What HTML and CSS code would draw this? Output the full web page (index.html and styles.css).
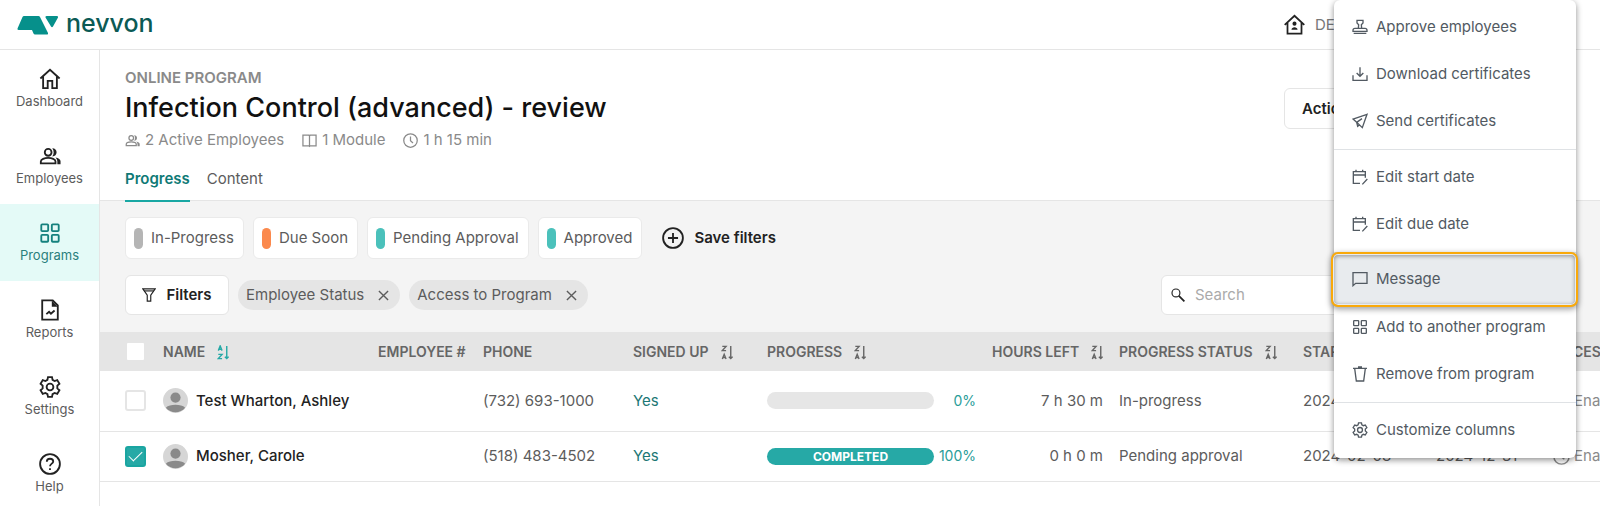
FILE: index.html
```
<!DOCTYPE html>
<html lang="en">
<head>
    <meta charset="UTF-8">
    <meta name="viewport" content="width=device-width, initial-scale=1.0">
    <title>Infection Control (advanced) - review | nevvon</title>
    <link rel="stylesheet" href="styles.css">
</head>
<body>
    <!-- Icon sprite -->
    <svg class="sprite" aria-hidden="true">
        <symbol id="i-home" viewBox="0 0 24 24"><path d="M1.500 11.500 12 2l10.500 9.500M4.500 9.500V22h5v-8h5v8h5V9.500"/></symbol>
        <symbol id="i-people" viewBox="0 0 24 24"><circle cx="10" cy="8" r="3.700"/><path d="M2 20v-2c0-2.500 4-4 8-4s8 1.500 8 4v2z"/><path class="solid" d="M14.500 3.500c3 0 4.700 2 4.700 4.500s-1.700 4.500-4.700 4.500c2-2.500 2-6.500 0-9zM18 13.500c3.500.6 5.500 2.200 5.500 4.200V21H20v-3c0-1.800-.7-3.200-2-4.500z"/></symbol>
        <symbol id="i-grid" viewBox="0 0 24 24"><rect x="2.500" y="2.500" width="7.500" height="7.500" rx="1"/><rect x="14" y="2.500" width="7.500" height="7.500" rx="1"/><rect x="2.500" y="14" width="7.500" height="7.500" rx="1"/><rect x="14" y="14" width="7.500" height="7.500" rx="1"/></symbol>
        <symbol id="i-report" viewBox="0 0 24 24"><path d="M3.500 1.500h11.500L20.500 7v15.500h-17z"/><path class="solid" d="M14 1.500V8.500h6.500z"/><path d="m8 16.500 3-2.500 2 2 4-3.500"/></symbol>
        <symbol id="i-gear" viewBox="0 0 24 24"><circle cx="12" cy="12" r="3.700"/><path d="m9.800 1.200-.6 3-2.200 1.300-2.900-1-2.400 4 2.300 2v3l-2.300 2 2.400 4 2.900-1 2.200 1.300.6 3h4.400l.6-3 2.200-1.300 2.900 1 2.400-4-2.300-2v-3l2.300-2-2.400-4-2.900 1-2.200-1.300-.6-3z"/></symbol>
        <symbol id="i-help" viewBox="0 0 24 24"><circle cx="12" cy="12" r="10.800"/><path d="M8.500 9.500c0-2 1.500-3.200 3.500-3.200s3.500 1.200 3.500 2.900c0 2.300-3.500 2.600-3.500 5.300M12 16.500v2"/></symbol>
        <symbol id="i-agency" viewBox="0 0 24 24"><path d="M.8 12.500 12 2l11.200 10.500M4 10v12.500h16V10"/><circle class="solid" cx="12" cy="11" r="2.300"/><path class="solid" d="M8.500 18c0-4 7-4 7 0z"/></symbol>
        <symbol id="i-book" viewBox="0 0 24 24"><path d="M1.500 3.500h9.500l1 1 1-1h9.500v17h-9.500l-1 1-1-1H1.500zM12 4.500v17"/></symbol>
        <symbol id="i-clock" viewBox="0 0 24 24"><circle cx="12" cy="12" r="10.800"/><path d="M12 5.500v7l4 3.500"/></symbol>
        <symbol id="i-plus" viewBox="0 0 24 24"><circle cx="12" cy="12" r="10.800"/><path d="M12 6.500v11M6.500 12h11"/></symbol>
        <symbol id="i-funnel" viewBox="0 0 24 24"><path d="M1.500 1.500h21l-7.500 11v10H9v-10z"/><path d="M4 5h16"/></symbol>
        <symbol id="i-close" viewBox="0 0 24 24"><path d="m2 2 20 20M22 2 2 22"/></symbol>
        <symbol id="i-search" viewBox="0 0 24 24"><circle cx="8.500" cy="8.500" r="6.800"/><path class="thick" d="m13.500 13.500 9.500 9.500"/></symbol>
        <symbol id="i-az" viewBox="0 0 12 16"><path d="m1 6 2-5 2 5M1.700 4.500h2.600M1 10h4l-4 4.500h4M10 1v13.500M8 12.500l2 2 2-2"/></symbol>
        <symbol id="i-za" viewBox="0 0 12 16"><path d="M1 1.500h4L1 6h4M1 15l2-5 2 5M1.700 13.500h2.600M10 1v13.500M8 12.500l2 2 2-2"/></symbol>
        <symbol id="i-user" viewBox="0 0 26 26"><circle cx="13" cy="13" r="13" fill="#d6d6d6"/><circle cx="13" cy="10" r="5.300" fill="#8a8a8a"/><path d="M3 20.500c4-4 16-4 20 0a13 13 0 0 1-20 0z" fill="#8a8a8a"/></symbol>
        <symbol id="i-stamp" viewBox="0 0 24 24"><path d="M9.500 14 10 8.500 7.500 6V2h9v4L14 8.500l.5 5.500M1.500 18.500V17c0-2 1-3 3-3h15c2 0 3 1 3 3v1.500zM2.500 21.500h19"/></symbol>
        <symbol id="i-download" viewBox="0 0 24 24"><path d="M12 2v13M7 10.500l5 5 5-5M1.500 14v7.500h21V14"/></symbol>
        <symbol id="i-send" viewBox="0 0 24 24"><path d="M22.500 2 1.500 9l5.500 5L15.500 22zM7 14l8-5.500M7 14l1.500 6 3-2.500"/></symbol>
        <symbol id="i-calendar" viewBox="0 0 24 24"><path d="M12 21.500H2V4h18v9M2 9h18M6 1v4M16 1v4M15.500 23l7.500-8"/></symbol>
        <symbol id="i-message" viewBox="0 0 24 24"><path d="M1.500 2.500h21v16H5.500l-4 3.500z"/></symbol>
        <symbol id="i-trash" viewBox="0 0 24 24"><path d="M1.500 3.500h21M4 3.500l2.500 19h11L20 3.500M9 1.500h6"/></symbol>
    </svg>

    <header class="topbar">
        <a href="#" class="brand">
            <svg class="brand-mark" viewBox="0 0 42 20"><path d="M7 1h14.500q1 0 1.500 1l8 16q.5 1.500-1 1.500H18q-1 0-1.500-1L15 15H2Q0 15 .5 13.500L5.500 2Q6 1 7 1zM29.500 1H40q1.500 0 1 1.500l-5 9q-1 1.500-2 0l-5.500-9Q28 1 29.500 1z"/></svg>
            <span>nevvon</span>
        </a>
        <a href="#" class="agency"><svg class="icon"><use href="#i-agency"/></svg>DEMO Agency</a>
    </header>

    <div class="layout">
        <nav class="sidebar">
            <a href="#"><svg class="icon"><use href="#i-home"/></svg>Dashboard</a>
            <a href="#"><svg class="icon"><use href="#i-people"/></svg>Employees</a>
            <a href="#" class="active"><svg class="icon"><use href="#i-grid"/></svg>Programs</a>
            <a href="#"><svg class="icon"><use href="#i-report"/></svg>Reports</a>
            <a href="#"><svg class="icon"><use href="#i-gear"/></svg>Settings</a>
            <a href="#"><svg class="icon"><use href="#i-help"/></svg>Help</a>
        </nav>

        <main class="content">
            <section class="program">
                <div class="program-head">
                    <div>
                        <p class="eyebrow">ONLINE PROGRAM</p>
                        <h1>Infection Control (advanced) - review</h1>
                        <ul class="meta">
                            <li><svg class="icon"><use href="#i-people"/></svg>2 Active Employees</li>
                            <li><svg class="icon"><use href="#i-book"/></svg>1 Module</li>
                            <li><svg class="icon"><use href="#i-clock"/></svg>1 h 15 min</li>
                        </ul>
                    </div>
                    <button type="button" class="btn actions">Actions</button>
                </div>
                <div class="tabs">
                    <a href="#" class="active">Progress</a>
                    <a href="#">Content</a>
                </div>
            </section>

            <section class="filters">
                <div class="filter-row">
                    <button type="button" class="status"><i class="grey"></i>In-Progress</button>
                    <button type="button" class="status"><i class="orange"></i>Due Soon</button>
                    <button type="button" class="status"><i class="teal"></i>Pending Approval</button>
                    <button type="button" class="status"><i class="teal"></i>Approved</button>
                    <button type="button" class="save"><svg class="icon"><use href="#i-plus"/></svg>Save filters</button>
                </div>
                <div class="filter-row">
                    <button type="button" class="btn filter-btn"><svg class="icon"><use href="#i-funnel"/></svg>Filters</button>
                    <button type="button" class="pill">Employee Status<svg class="icon"><use href="#i-close"/></svg></button>
                    <button type="button" class="pill">Access to Program<svg class="icon"><use href="#i-close"/></svg></button>
                    <label class="search">
                        <svg class="icon"><use href="#i-search"/></svg>
                        <input type="text" placeholder="Search" aria-label="Search">
                    </label>
                </div>
            </section>

            <table class="employees">
                <colgroup>
                    <col class="c-check"><col class="c-name"><col class="c-number"><col class="c-phone"><col class="c-signed"><col class="c-progress"><col class="c-hours"><col class="c-status"><col class="c-start"><col class="c-end"><col class="c-access">
                </colgroup>
                <thead>
                    <tr>
                        <th><input type="checkbox" aria-label="Select all"></th>
                        <th>NAME<svg class="sort on"><use href="#i-az"/></svg></th>
                        <th>EMPLOYEE #</th>
                        <th>PHONE</th>
                        <th>SIGNED UP<svg class="sort"><use href="#i-za"/></svg></th>
                        <th>PROGRESS<svg class="sort"><use href="#i-za"/></svg></th>
                        <th class="right">HOURS LEFT<svg class="sort"><use href="#i-za"/></svg></th>
                        <th>PROGRESS STATUS<svg class="sort"><use href="#i-za"/></svg></th>
                        <th>START DATE</th>
                        <th>END DATE</th>
                        <th>ACCESS</th>
                    </tr>
                </thead>
                <tbody>
                    <tr class="tall">
                        <td><input type="checkbox" aria-label="Select Test Wharton, Ashley"></td>
                        <td><div class="person"><svg><use href="#i-user"/></svg>Test Wharton, Ashley</div></td>
                        <td></td>
                        <td>(732) 693-1000</td>
                        <td><a href="#">Yes</a></td>
                        <td><div class="progress"><div class="bar"></div><span>0%</span></div></td>
                        <td class="right">7 h 30 m</td>
                        <td>In-progress</td>
                        <td>2024-02-08</td>
                        <td>2024-12-31</td>
                        <td><div class="access"><svg class="icon"><use href="#i-clock"/></svg>Enabled</div></td>
                    </tr>
                    <tr>
                        <td><input type="checkbox" aria-label="Select Mosher, Carole" checked></td>
                        <td><div class="person"><svg><use href="#i-user"/></svg>Mosher, Carole</div></td>
                        <td></td>
                        <td>(518) 483-4502</td>
                        <td><a href="#">Yes</a></td>
                        <td><div class="progress"><div class="bar full">COMPLETED</div><span>100%</span></div></td>
                        <td class="right">0 h 0 m</td>
                        <td>Pending approval</td>
                        <td>2024-02-08</td>
                        <td>2024-12-31</td>
                        <td><div class="access"><svg class="icon"><use href="#i-clock"/></svg>Enabled</div></td>
                    </tr>
                </tbody>
            </table>
        </main>
    </div>

    <!-- Actions menu -->
    <div class="menu">
        <button type="button"><svg class="icon"><use href="#i-stamp"/></svg>Approve employees</button>
        <button type="button"><svg class="icon"><use href="#i-download"/></svg>Download certificates</button>
        <button type="button"><svg class="icon"><use href="#i-send"/></svg>Send certificates</button>
        <hr>
        <button type="button"><svg class="icon"><use href="#i-calendar"/></svg>Edit start date</button>
        <button type="button"><svg class="icon"><use href="#i-calendar"/></svg>Edit due date</button>
        <hr>
        <button type="button" class="selected"><svg class="icon"><use href="#i-message"/></svg>Message</button>
        <button type="button"><svg class="icon"><use href="#i-grid"/></svg>Add to another program</button>
        <button type="button"><svg class="icon"><use href="#i-trash"/></svg>Remove from program</button>
        <hr>
        <button type="button"><svg class="icon"><use href="#i-gear"/></svg>Customize columns</button>
    </div>
</body>
</html>
```

FILE: styles.css
```
* {
    margin: 0;
    padding: 0;
    box-sizing: border-box;
}

body {
    font-family: Inter, "Liberation Sans", sans-serif;
    font-size: 15px;
    line-height: 20px;
    color: #5c5c5c;
    background: #fff;
    position: relative;
    overflow: hidden;
}

a {
    color: inherit;
    text-decoration: none;
}

button {
    font: inherit;
    color: inherit;
    background: none;
    border: 0;
    cursor: pointer;
    white-space: nowrap;
}

.sprite {
    display: none;
}

.icon,
.sort {
    flex: none;
    width: 14px;
    height: 14px;
    fill: none;
    stroke: currentColor;
    stroke-width: 2;
}

.solid {
    fill: currentColor;
    stroke: none;
}

.thick {
    stroke-width: 3;
}

/* Top bar */
.topbar {
    display: flex;
    align-items: center;
    justify-content: space-between;
    height: 50px;
    padding: 0 182px 0 17px;
    border-bottom: 1px solid #e5e5e5;
}

.brand {
    display: flex;
    align-items: center;
    gap: 7px;
    font-size: 25px;
    line-height: 46px;
    font-weight: 500;
    color: #0b5a55;
}

.brand span {
    margin-bottom: 4px;
}

.brand-mark {
    width: 42px;
    height: 20px;
    fill: #06908b;
}

.agency {
    display: flex;
    align-items: center;
    gap: 10px;
    color: #777;
}

.agency .icon {
    width: 21px;
    height: 21px;
    color: #222;
}

/* Sidebar */
.layout {
    display: flex;
}

.sidebar {
    flex: none;
    width: 100px;
    border-right: 1px solid #e5e5e5;
}

.sidebar a {
    display: flex;
    flex-direction: column;
    align-items: center;
    gap: 1px;
    padding: 18px 0 16px;
    font-size: 13px;
    color: #5c5c5c;
}

.sidebar .icon {
    width: 22px;
    height: 22px;
    color: #222;
}

.sidebar .active {
    color: #2a7f7c;
    background: #e4faf7;
}

.sidebar .active .icon {
    color: #14817e;
}

/* Program heading */
.content {
    flex: 1;
    min-width: 0;
    overflow: hidden;
}

.program {
    padding: 18px 25px 0;
    border-bottom: 1px solid #e5e5e5;
}

.program-head {
    display: flex;
    justify-content: space-between;
}

.eyebrow {
    font-size: 15px;
    font-weight: 600;
    color: #8a8a8a;
}

h1 {
    font-size: 27px;
    line-height: 40px;
    font-weight: 500;
    color: #111;
}

.meta {
    display: flex;
    gap: 18px;
    line-height: 24px;
    list-style: none;
    color: #8a8a8a;
}

.meta li {
    display: flex;
    align-items: center;
    gap: 5px;
}

.meta .icon {
    width: 15px;
    height: 15px;
}

.btn {
    font-weight: 600;
    color: #222;
    background: #fff;
    border: 1px solid #e5e5e5;
    border-radius: 6px;
}

.actions {
    width: 291px;
    height: 41px;
    margin-top: 20px;
    padding: 0 17px;
    text-align: left;
}

.tabs {
    display: flex;
    gap: 17px;
    margin-bottom: -2px;
}

.tabs a {
    padding: 17px 0 11px;
    border-bottom: 2px solid transparent;
}

.tabs .active {
    font-weight: 600;
    color: #0f7a76;
    border-color: #18a7a3;
}

/* Filters */
.filters {
    display: flex;
    flex-direction: column;
    gap: 16px;
    padding: 16px 25px 17px;
    background: #f4f4f4;
}

.filter-row {
    display: flex;
    align-items: center;
    gap: 9px;
}

.status {
    display: flex;
    align-items: center;
    gap: 8px;
    height: 42px;
    padding: 0 9px 0 8px;
    background: #fff;
    border: 1px solid #eaeaea;
    border-radius: 6px;
}

.status i {
    width: 9px;
    height: 21px;
    border-radius: 5px;
}

.grey {
    background: #b5b5b5;
}

.orange {
    background: #fb894d;
}

.teal {
    background: #4bc1bb;
}

.save {
    display: flex;
    align-items: center;
    gap: 10px;
    padding: 0 11px;
    font-weight: 600;
    color: #222;
}

.save .icon {
    width: 22px;
    height: 22px;
}

.filter-btn {
    display: flex;
    align-items: center;
    justify-content: center;
    gap: 10px;
    width: 104px;
    height: 40px;
}

.pill {
    display: flex;
    align-items: center;
    gap: 14px;
    height: 30px;
    padding: 0 11px 0 8px;
    background: #e5e5e5;
    border-radius: 15px;
}

.pill .icon {
    width: 11px;
    height: 11px;
    stroke-width: 3;
}

.search {
    display: flex;
    align-items: center;
    gap: 10px;
    width: 414px;
    height: 40px;
    margin-left: auto;
    padding: 0 9px;
    background: #fff;
    border: 1px solid #e5e5e5;
    border-radius: 6px;
    color: #222;
}

.search input {
    flex: 1;
    min-width: 0;
    font: inherit;
    border: 0;
    outline: 0;
}

.search input::placeholder {
    color: #aaa;
}

/* Employee table */
.employees {
    width: 1600px;
    table-layout: fixed;
    border-collapse: collapse;
    white-space: nowrap;
}

.c-check { width: 55px; }
.c-name { width: 215px; }
.c-number { width: 105px; }
.c-phone { width: 150px; }
.c-signed { width: 134px; }
.c-progress { width: 225px; }
.c-hours { width: 127px; }
.c-status { width: 184px; }
.c-start { width: 133px; }
.c-end { width: 117px; }

.employees th,
.employees td {
    padding: 0 8px;
    text-align: left;
    vertical-align: middle;
}

.employees th:first-child,
.employees td:first-child {
    padding: 0 0 0 25px;
}

.employees th {
    height: 39px;
    font-size: 14px;
    font-weight: 600;
    color: #666;
    background: #e5e5e5;
}

.employees td {
    height: 50px;
    border-bottom: 1px solid #e5e5e5;
}

.employees .tall td {
    height: 60px;
}

.employees .right {
    text-align: right;
}

.employees td a {
    color: #1c7775;
}

.employees input {
    display: block;
    appearance: none;
    width: 21px;
    height: 21px;
    background: #fff;
    border: 2px solid #e5e5e5;
    border-radius: 3px;
}

.employees input:checked {
    border-color: #1aa5a1;
    background: #26a9a6;
    position: relative;
}

.employees input:checked::after {
    content: "";
    position: absolute;
    left: 5px;
    top: 0;
    width: 6px;
    height: 12px;
    border: solid #fff;
    border-width: 0 1px 1px 0;
    transform: rotate(45deg);
}

.sort {
    width: 12px;
    height: 15px;
    margin-left: 12px;
    vertical-align: middle;
    stroke-width: 1.5;
}

.sort.on {
    color: #26a9a6;
}

.person {
    display: flex;
    align-items: center;
    gap: 8px;
    font-weight: 500;
    color: #222;
}

.person svg {
    width: 25px;
    height: 25px;
}

.progress {
    display: flex;
    align-items: center;
    justify-content: space-between;
    font-size: 14px;
    color: #2a9d99;
}

.bar {
    width: 167px;
    height: 17px;
    border-radius: 9px;
    background: #e6e6e6;
}

.bar.full {
    font-size: 12px;
    line-height: 17px;
    font-weight: 700;
    text-align: center;
    color: #fff;
    background: #26a9a6;
}

.access {
    display: flex;
    align-items: center;
    gap: 4px;
    color: #8a8a8a;
}

.access .icon {
    width: 17px;
    height: 17px;
}

/* Actions menu */
.menu {
    position: absolute;
    top: 0;
    right: 24px;
    width: 242px;
    padding: 4px 0;
    background: #fff;
    border-radius: 6px;
    box-shadow: 0 2px 6px rgba(0, 0, 0, 0.45);
    color: #525a62;
}

.menu button {
    display: flex;
    align-items: center;
    gap: 8px;
    width: 100%;
    height: 47px;
    padding: 0 18px 1px;
}

.menu .icon {
    width: 16px;
    height: 16px;
}

.menu hr {
    margin: 4px 0;
    border: 0;
    border-top: 1px solid #dfe2e5;
}

.menu .selected {
    width: 241px;
    height: 49px;
    margin-top: -2px;
    background: #e8ebee;
    border-radius: 4px;
    outline: 2px solid #f9a90a;
    outline-offset: 1px;
    box-shadow: 0 0 0 1px #e8ebee, 0 2px 6px 3px rgba(0, 0, 0, 0.4), inset 0 1px 4px rgba(0, 0, 0, 0.4);
}
```
